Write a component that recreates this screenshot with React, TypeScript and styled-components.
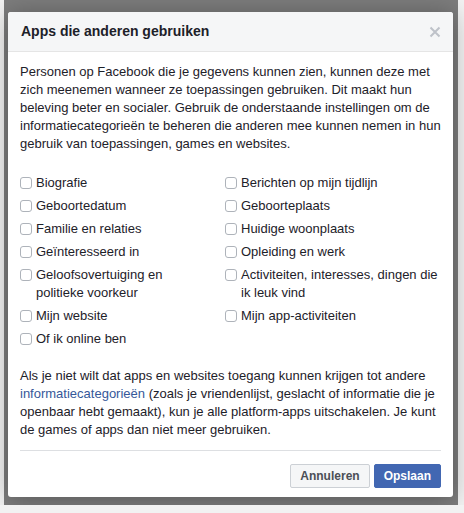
import React, { useState } from 'react';
import styled, { createGlobalStyle } from 'styled-components';

const GlobalStyle = createGlobalStyle`
  html, body {
    margin: 0;
    padding: 0;
    background: #f2f2f2;
  }
  body {
    font-family: "Liberation Sans", Arial, Helvetica, sans-serif;
    -webkit-font-smoothing: antialiased;
  }
`;

const Backdrop = styled.div`
  width: 454px;
  height: 505px;
  margin-left: 4px;
  box-sizing: border-box;
  padding: 12px 0 0 4px;
  background: #7d7d7d;
`;

const Dialog = styled.div`
  width: 445px;
  background: #fff;
  border-radius: 3px;
  box-shadow: 0 2px 26px rgba(0, 0, 0, 0.3);
  color: #1d2129;
  overflow: hidden;
`;

const Header = styled.div`
  display: flex;
  align-items: center;
  justify-content: space-between;
  height: 39px;
  padding: 0 12px 0 13px;
  background: #f5f6f7;
  border-bottom: 1px solid #e5e5e5;
`;

const Title = styled.h3`
  margin: 0;
  font-size: 14px;
  font-weight: bold;
  line-height: 19px;
  color: #1d2129;
`;

const CloseButton = styled.button`
  display: flex;
  align-items: center;
  justify-content: center;
  width: 16px;
  height: 16px;
  margin-right: -2px;
  padding: 0;
  border: none;
  background: none;
  cursor: pointer;
`;

const Body = styled.div`
  padding: 11px 12px 0;
`;

const Paragraph = styled.p`
  margin: 0;
  font-size: 13px;
  line-height: 18px;
`;

const Link = styled.a`
  color: #365899;
  text-decoration: none;
  cursor: pointer;
`;

const OptionGrid = styled.div`
  display: grid;
  grid-template-columns: 185px 1fr;
  column-gap: 20px;
  margin: 18px 0 17px;
`;

const Option = styled.label`
  display: flex;
  align-items: flex-start;
  gap: 4px;
  padding: 3px 0 2px;
  font-size: 13px;
  line-height: 18px;
  cursor: pointer;
`;

const Box = styled.span<{ $checked: boolean }>`
  flex: none;
  box-sizing: border-box;
  width: 12px;
  height: 12px;
  margin-top: 3px;
  border: 1px solid ${(p) => (p.$checked ? '#4267b2' : '#aeb3ba')};
  border-radius: 3px;
  background: ${(p) => (p.$checked ? '#4267b2' : '#fff')};
  display: flex;
  align-items: center;
  justify-content: center;
`;

const HiddenInput = styled.input.attrs({ type: 'checkbox' })`
  display: none;
`;

const Divider = styled.hr`
  margin: 11px 0 0;
  border: none;
  border-top: 1px solid #dddfe2;
`;

const Footer = styled.div`
  display: flex;
  justify-content: flex-end;
  gap: 4px;
  padding: 13px 0 9px;
`;

const Button = styled.button<{ $primary?: boolean }>`
  height: 24px;
  padding: 0 9px;
  border-radius: 2px;
  border: 1px solid ${(p) => (p.$primary ? '#4267b2' : '#ccd0d5')};
  background: ${(p) => (p.$primary ? '#4267b2' : '#f5f6f7')};
  color: ${(p) => (p.$primary ? '#fff' : '#4b4f56')};
  font-family: inherit;
  font-size: 12px;
  font-weight: bold;
  line-height: 22px;
  cursor: pointer;
`;

const options: string[][] = [
  ['Biografie', 'Berichten op mijn tijdlijn'],
  ['Geboortedatum', 'Geboorteplaats'],
  ['Familie en relaties', 'Huidige woonplaats'],
  ['Geïnteresseerd in', 'Opleiding en werk'],
  ['Geloofsovertuiging en politieke voorkeur', 'Activiteiten, interesses, dingen die ik leuk vind'],
  ['Mijn website', 'Mijn app-activiteiten'],
  ['Of ik online ben'],
];

const CheckOption: React.FC<{ label: string }> = ({ label }) => {
  const [checked, setChecked] = useState(false);
  return (
    <Option>
      <HiddenInput checked={checked} onChange={() => setChecked(!checked)} />
      <Box $checked={checked}>
        {checked && (
          <svg width="8" height="8" viewBox="0 0 8 8">
            <path d="M1 4 L3 6 L7 1.5" stroke="#fff" strokeWidth="1.5" fill="none" />
          </svg>
        )}
      </Box>
      <span>{label}</span>
    </Option>
  );
};

const App: React.FC = () => {
  return (
    <>
      <GlobalStyle />
      <Backdrop>
        <Dialog>
          <Header>
            <Title>Apps die anderen gebruiken</Title>
            <CloseButton aria-label="Sluiten">
              <svg width="12" height="12" viewBox="0 0 12 12">
                <path d="M1.5 1.5 L10.5 10.5 M10.5 1.5 L1.5 10.5" stroke="#bec2c9" strokeWidth="2" />
              </svg>
            </CloseButton>
          </Header>
          <Body>
            <Paragraph>
              Personen op Facebook die je gegevens kunnen zien, kunnen deze met zich meenemen wanneer ze
              toepassingen gebruiken. Dit maakt hun beleving beter en socialer. Gebruik de onderstaande
              instellingen om de informatiecategorieën te beheren die anderen mee kunnen nemen in hun
              gebruik van toepassingen, games en websites.
            </Paragraph>
            <OptionGrid>
              {options.flat().map((label) => (
                <CheckOption key={label} label={label} />
              ))}
            </OptionGrid>
            <Paragraph>
              Als je niet wilt dat apps en websites toegang kunnen krijgen tot andere{' '}
              <Link>informatiecategorieën</Link> (zoals je vriendenlijst, geslacht of informatie die je
              openbaar hebt gemaakt), kun je alle platform-apps uitschakelen. Je kunt de games of apps dan
              niet meer gebruiken.
            </Paragraph>
            <Divider />
            <Footer>
              <Button>Annuleren</Button>
              <Button $primary>Opslaan</Button>
            </Footer>
          </Body>
        </Dialog>
      </Backdrop>
    </>
  );
};

export default App;
